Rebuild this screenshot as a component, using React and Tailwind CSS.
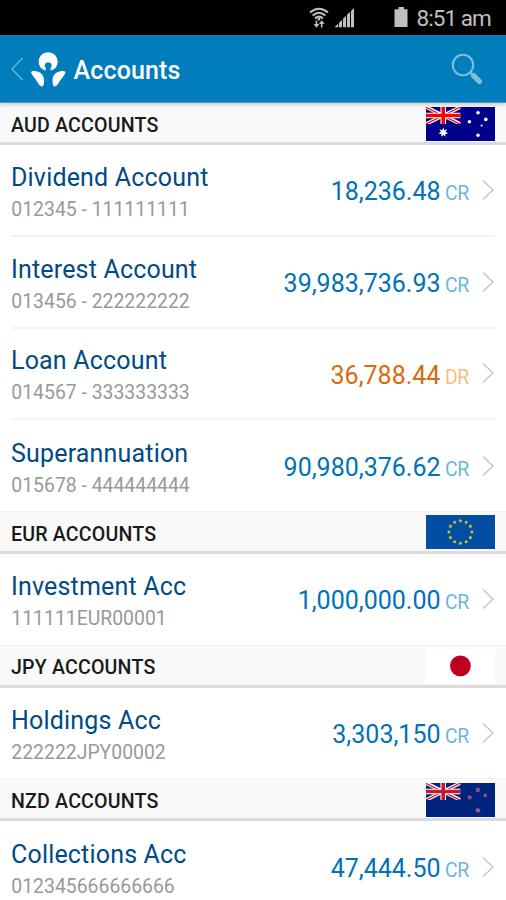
import clsx from 'clsx';

const sections = [
  {
    title: 'AUD ACCOUNTS',
    flag: 'au',
    accounts: [
      { name: 'Dividend Account', number: '012345 - 111111111', balance: '18,236.48', type: 'CR' },
      { name: 'Interest Account', number: '013456 - 222222222', balance: '39,983,736.93', type: 'CR' },
      { name: 'Loan Account', number: '014567 - 333333333', balance: '36,788.44', type: 'DR' },
      { name: 'Superannuation', number: '015678 - 444444444', balance: '90,980,376.62', type: 'CR' }
    ]
  },
  {
    title: 'EUR ACCOUNTS',
    flag: 'eu',
    accounts: [{ name: 'Investment Acc', number: '111111EUR00001', balance: '1,000,000.00', type: 'CR' }]
  },
  {
    title: 'JPY ACCOUNTS',
    flag: 'jp',
    accounts: [{ name: 'Holdings Acc', number: '222222JPY00002', balance: '3,303,150', type: 'CR' }]
  },
  {
    title: 'NZD ACCOUNTS',
    flag: 'nz',
    accounts: [{ name: 'Collections Acc', number: '012345666666666', balance: '47,444.50', type: 'CR' }]
  }
];

const starPoints = (cx, cy, r, inner, points) => {
  const list = [];
  for (let i = 0; i < points * 2; i++) {
    const radius = i % 2 === 0 ? r : inner;
    const angle = (Math.PI * i) / points - Math.PI / 2;
    list.push(`${cx + radius * Math.cos(angle)},${cy + radius * Math.sin(angle)}`);
  }
  return list.join(' ');
};

const UnionJack = ({ blue, red }) => (
  <svg width="34.5" height="17" viewBox="0 0 34.5 17" preserveAspectRatio="none">
    <rect width="34.5" height="17" fill={blue} />
    <path d="M0 0L34.5 17M34.5 0L0 17" stroke="#fff" strokeWidth="3.6" />
    <path d="M0 .4L34.5 17.4M34.5 0L0 17" stroke={red} strokeWidth="1.3" />
    <path d="M17.25 0V17M0 8.5H34.5" stroke="#fff" strokeWidth="5.6" />
    <path d="M17.25 0V17M0 8.5H34.5" stroke={red} strokeWidth="3.6" />
  </svg>
);

const Flag = ({ code }) => {
  if (code === 'au') {
    return (
      <svg className="mt-[2px] mr-[0.5px] h-[34px] w-[69px]" viewBox="0 0 69 34">
        <rect width="69" height="34" fill="#00008b" />
        <UnionJack blue="#00008b" red="#ff0000" />
        <polygon points={starPoints(17.3, 25.4, 4.9, 2.5, 7)} fill="#fff" />
        <circle cx="52" cy="5.7" r="1.8" fill="#fff" />
        <circle cx="43.4" cy="14.7" r="1.8" fill="#fff" />
        <circle cx="59.8" cy="12.4" r="1.8" fill="#fff" />
        <circle cx="55.6" cy="18.4" r="1" fill="#fff" />
        <circle cx="52" cy="28.2" r="1.8" fill="#fff" />
      </svg>
    );
  }
  if (code === 'eu') {
    return (
      <svg className="mt-[2px] mr-[0.5px] h-[34px] w-[69px]" viewBox="0 0 69 34">
        <rect width="69" height="34" fill="#034ea2" />
        {Array.from({ length: 12 }, (_, i) => (
          <polygon
            key={i}
            points={starPoints(
              34.4 + 11.5 * Math.sin((i * Math.PI) / 6),
              17 - 11.3 * Math.cos((i * Math.PI) / 6),
              1.8,
              1.3,
              5
            )}
            fill="#c0c92a"
          />
        ))}
      </svg>
    );
  }
  if (code === 'jp') {
    return (
      <svg className="mt-[2px] mr-[0.5px] h-[34px] w-[69px]" viewBox="0 0 69 34">
        <rect width="69" height="34" fill="#fff" />
        <circle cx="34.4" cy="16.8" r="10.4" fill="#bc0020" />
      </svg>
    );
  }
  return (
    <svg className="mt-[2px] mr-[0.5px] h-[34px] w-[69px]" viewBox="0 0 69 34">
      <rect width="69" height="34" fill="#00247d" />
      <UnionJack blue="#00247d" red="#cc142b" />
      {[[51.9, 6.8, 2.4], [43.7, 14.6, 2.3], [59.2, 12.4, 2], [51.9, 27.2, 2.6]].map(([x, y, r]) => (
        <g key={y}>
          <polygon points={starPoints(x, y, r + 0.2, r * 0.6, 5)} fill="#a9a5cf" />
          <polygon points={starPoints(x, y, r - 0.4, r * 0.45, 5)} fill="#d3284a" />
        </g>
      ))}
    </svg>
  );
};

const StatusBar = () => (
  <div className="flex h-[35px] shrink-0 items-center bg-black text-[#bfbfbf]">
    <svg className="ml-[309px] h-[22px] w-5" viewBox="0 0 20 22" fill="none" stroke="currentColor">
      <path d="M1 5.6Q10 -2 19 5.6M3.6 8.6Q10 3 16.4 8.6M6 11.4Q10 7.8 14 11.4" strokeWidth="2" />
      <path d="M7.5 13.5V19.5M12.7 20.5V14.5" strokeWidth="1.6" />
      <path d="M4.6 17H10.4L7.5 20.8ZM9.8 17H15.6L12.7 13.2Z" fill="currentColor" stroke="none" />
      <circle cx="10" cy="12.2" r="1.3" fill="currentColor" stroke="none" />
    </svg>
    <svg className="ml-[6px] h-5 w-[19px]" viewBox="0 0 19 20" fill="currentColor">
      <path d="M0 19.3V18.7L3.2 15.5V19.3ZM4 19.3V14.7L7 11.7V19.3ZM8 19.3V10.7L11 7.7V19.3ZM12 19.3V6.8L15 3.8V19.3ZM16 19.3V3L19 0V19.3Z" />
    </svg>
    <svg className="mb-[1px] ml-10 h-5 w-[14px]" viewBox="0 0 14 20" fill="currentColor">
      <path d="M4.5 0H10V2.3H13.5V20H.5V2.3H4.5Z" />
    </svg>
    <span className="mt-[2px] ml-[8.5px] text-[22.5px] leading-none tracking-[-0.95px] whitespace-nowrap">8:51 am</span>
  </div>
);

const Header = () => (
  <header className="relative z-10 flex h-[68px] shrink-0 items-center border-b border-[#5495bb] bg-[#007dba] shadow-[0_1px_5px_rgba(0,0,0,0.25)]">
    <svg className="ml-[11px] h-6 w-3" viewBox="0 0 12 24" fill="none" stroke="#73b9db" strokeWidth="1.3">
      <path d="M11.6 1L1 12L11.6 23" />
    </svg>
    <svg className="mt-[1px] ml-2 h-[35px] w-[35px]" viewBox="0 0 35 35" fill="#fff">
      <path d="M14.6 18.5C10.3 17.6 7.7 14 7.7 9.8C7.7 4.4 12 0.3 17.2 0.3C22.4 0.3 26.7 4.4 26.7 9.8C26.7 14 24.1 17.6 19.8 18.5C19.4 17 19.6 15.9 20.1 15.2C21.6 12.6 19.8 10.6 17.2 10.6C14.6 10.6 12.8 12.6 14.3 15.2C14.8 15.9 15 17 14.6 18.5Z" />
      <path d="M.5 21.5C-.4 20 .4 18.9 2.5 18.9C8.6 18.7 13.1 22.6 13.1 28.3C13.1 30.5 12.9 32.4 12.3 33.5C11.6 34.8 9.7 34.6 8.6 33.3C6.6 30.9 5.6 28.7 4 26.6C2.7 24.8 1.3 23.1 .5 21.5Z" />
      <path d="M34.1 21.5C35 20 34.2 18.9 32.1 18.9C26 18.7 21.5 22.6 21.5 28.3C21.5 30.5 21.7 32.4 22.3 33.5C23 34.8 24.9 34.6 26 33.3C28 30.9 29 28.7 30.6 26.6C31.9 24.8 33.3 23.1 34.1 21.5Z" />
    </svg>
    <h1 className="mt-[3px] ml-[7.5px] text-[25px] font-medium leading-none tracking-[0.15px] text-white">Accounts</h1>
    <svg className="mr-[23px] ml-auto h-8 w-8" viewBox="0 0 32 32" fill="none" stroke="#7fbfdd">
      <circle cx="12" cy="12" r="10.2" strokeWidth="2" />
      <path d="M19 19L22 22" strokeWidth="2.4" />
      <path d="M22.6 22.6L28.3 28.3" strokeWidth="5.4" strokeLinecap="round" />
    </svg>
  </header>
);

const AccountRow = ({ account, last }) => {
  const debit = account.type === 'DR';

  return (
    <div className={clsx('mx-[11px] flex items-center justify-between', last ? 'h-[90.5px]' : 'h-[91.8px] border-b-2 border-[#f4f4f4]')}>
      <div className="mt-[7px] flex flex-col whitespace-nowrap">
        <span className="text-[25px] leading-[32px] tracking-[0.18px] text-[#004a85]">{account.name}</span>
        <span className="ml-[0.3px] text-[19.4px] leading-[31px] text-[#999]">{account.number}</span>
      </div>
      <div className="mt-[2px] flex items-center">
        <div className="mt-[1.6px] flex items-baseline whitespace-nowrap">
          <span className={clsx('text-[25px]', debit ? 'text-[#d86b0b]' : 'text-[#0072b5]')}>{account.balance}</span>
          <span className={clsx('ml-[4.5px] text-[19.4px] tracking-[-0.3px]', debit ? 'text-[#f8bd80]' : 'text-[#6eb5da]')}>{account.type}</span>
        </div>
        <svg className="mr-[1px] mb-[2px] ml-[13px] h-5 w-3" viewBox="0 0 12 20" fill="none" stroke="#c4c4c4" strokeWidth="1.4">
          <path d="M1 .5L11 10L1 19.5" />
        </svg>
      </div>
    </div>
  );
};

const AccountSection = ({ section, first }) => (
  <section>
    <div className={clsx('flex items-center justify-between border-b-[3px] border-[#dcdcdc] bg-[#f9f9f9] px-[11px]', first ? 'h-[42px]' : 'h-[43.2px] border-t border-t-[#f1f1f1]')}>
      <h2 className="mt-[6px] text-[19.6px] font-medium leading-none tracking-[0.18px] text-[#1a1a1a]">{section.title}</h2>
      <Flag code={section.flag} />
    </div>
    {section.accounts.map((account, i) => (
      <AccountRow key={account.number} account={account} last={i === section.accounts.length - 1} />
    ))}
  </section>
);

export default function App() {
  return (
    <div className="flex h-[900px] w-[506px] flex-col overflow-hidden bg-white font-['Roboto',sans-serif]">
      <StatusBar />
      <Header />
      <main>
        {sections.map((section, i) => (
          <AccountSection key={section.title} section={section} first={i === 0} />
        ))}
      </main>
    </div>
  );
}
